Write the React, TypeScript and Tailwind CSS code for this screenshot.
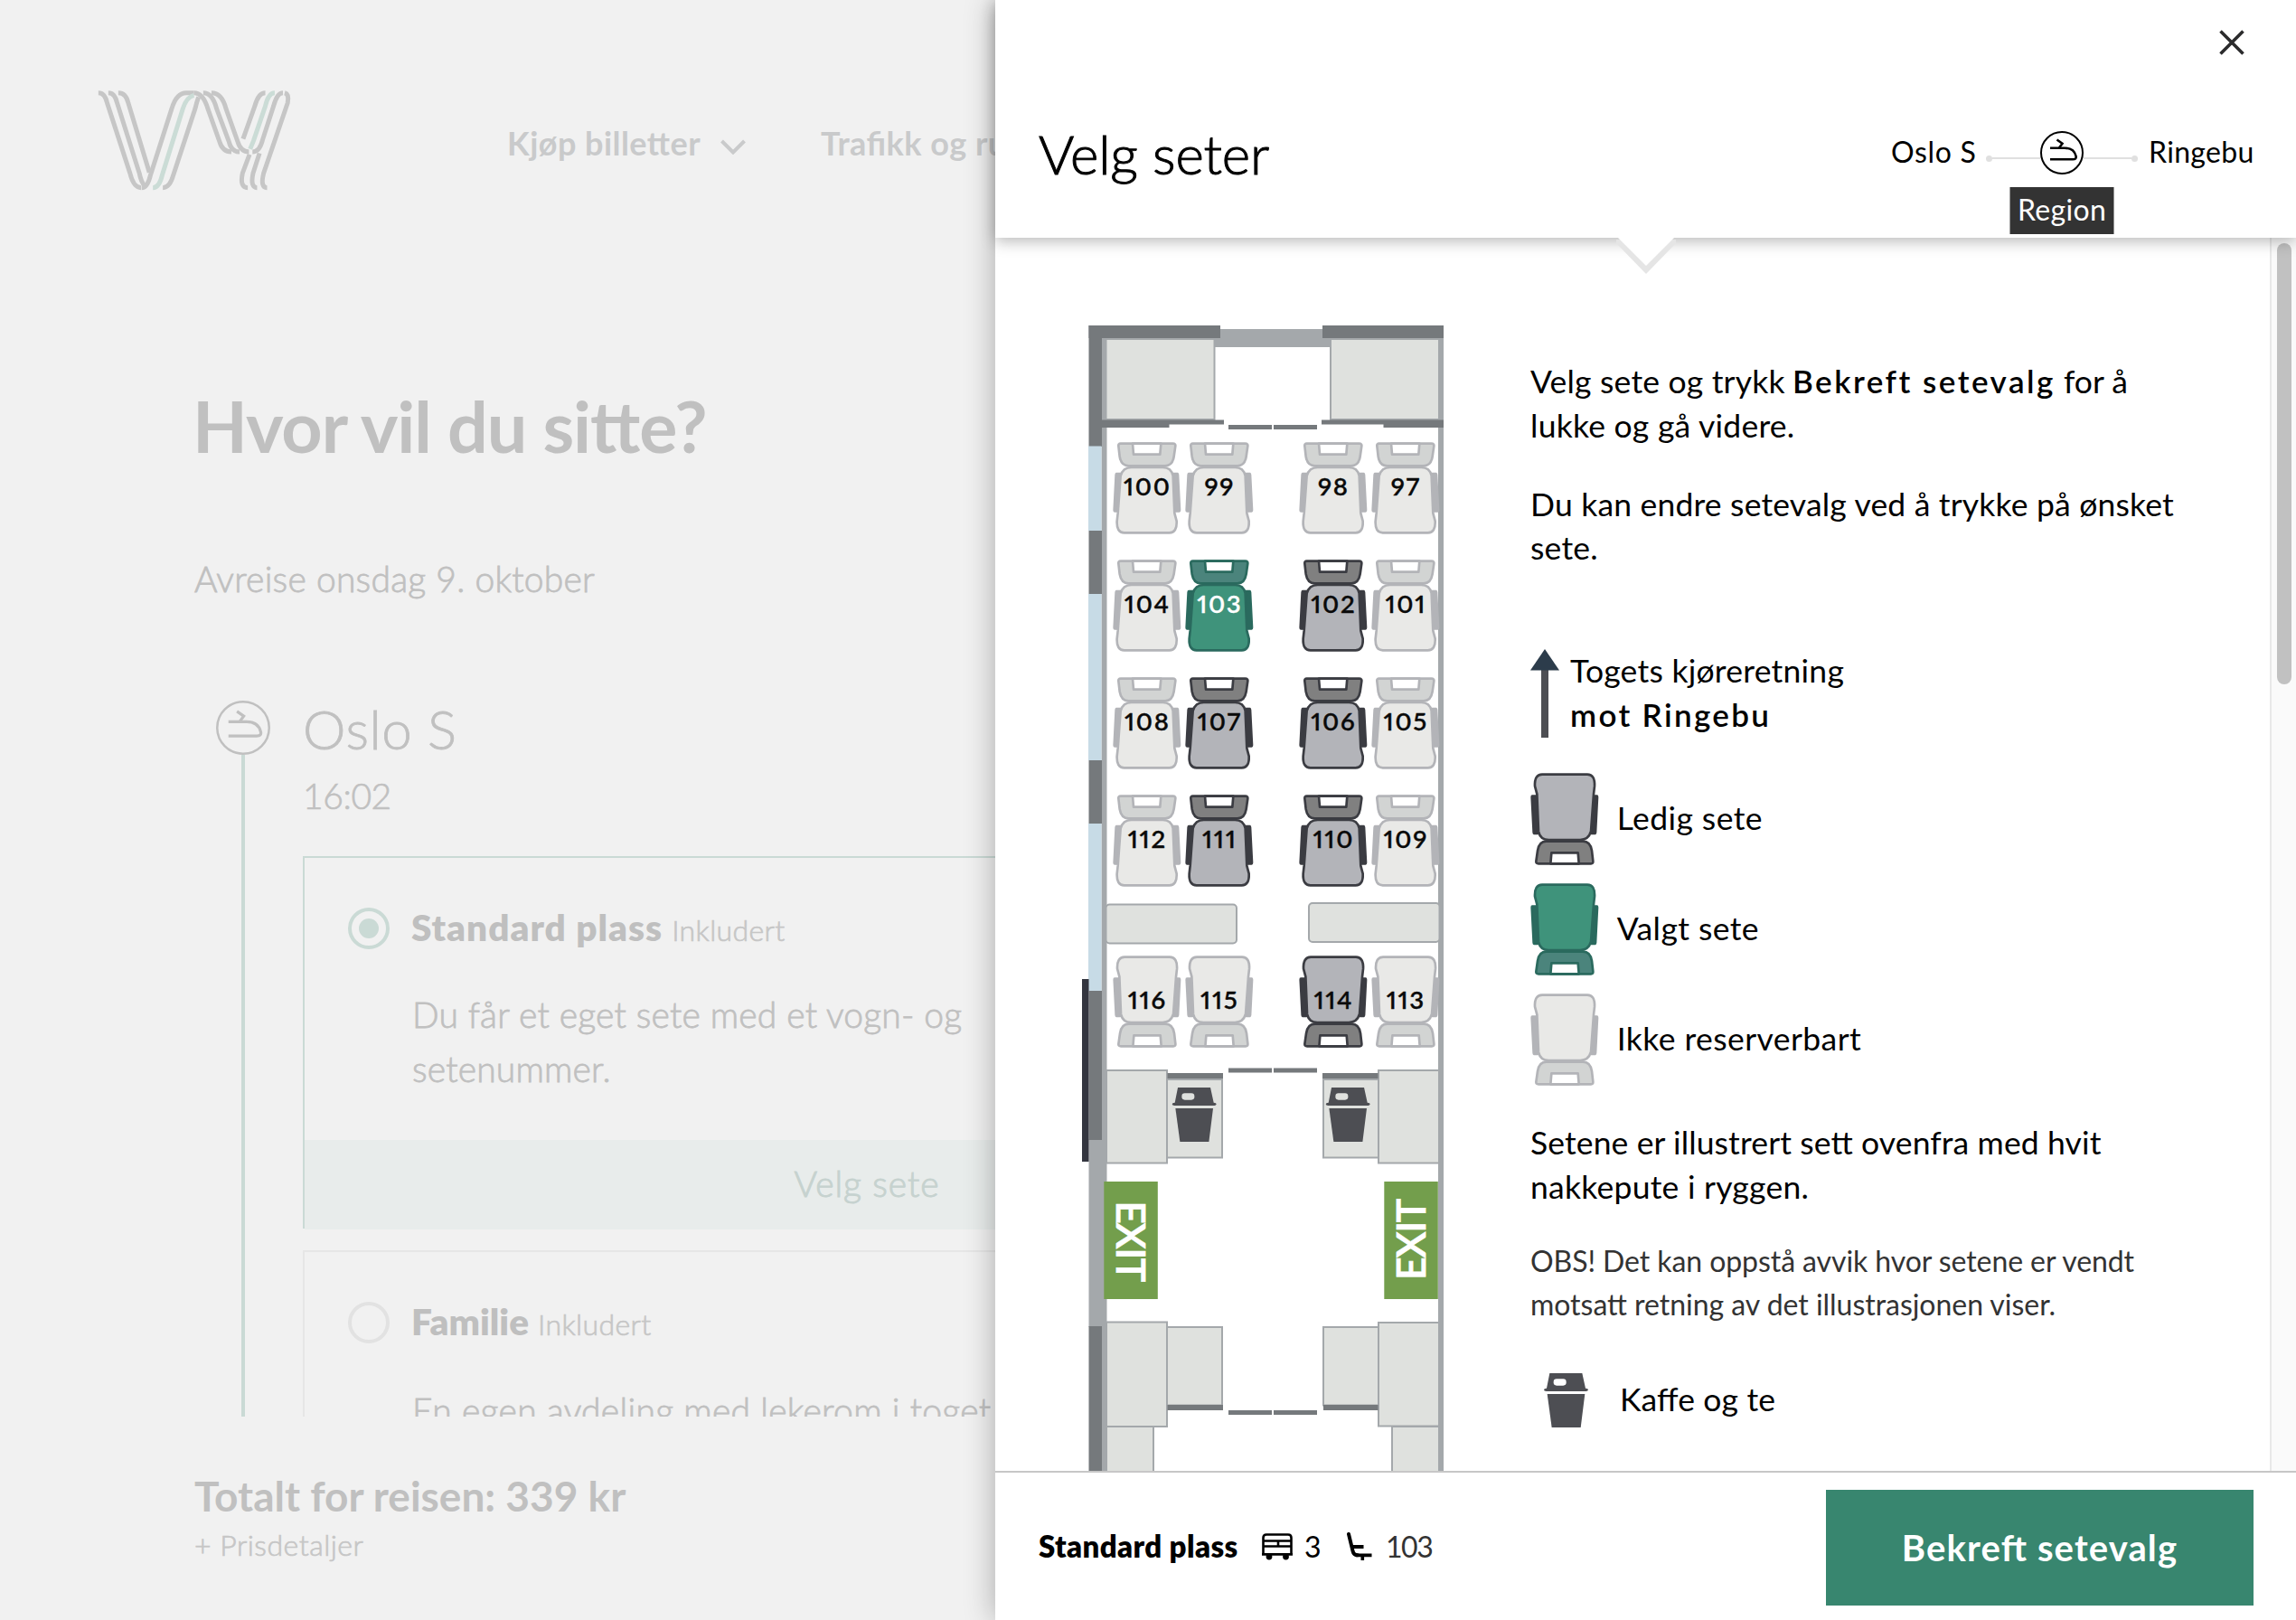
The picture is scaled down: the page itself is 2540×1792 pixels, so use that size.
import type { ReactNode } from "react";

type Kind = "taken" | "free" | "picked";

const SEAT_COLORS: Record<Kind, { line: string; head: string; body: string }> = {
  taken: { line: "#b3b4b8", head: "#d2d4d3", body: "#e9e9e7" },
  free: { line: "#3b3c42", head: "#808080", body: "#b3b4b9" },
  picked: { line: "#2a6a5e", head: "#4b847c", body: "#3f937b" },
};

function SeatShape({ kind }: { kind: Kind }) {
  const c = SEAT_COLORS[kind];
  return (
    <g stroke={c.line} strokeWidth={8} strokeLinejoin="round">
      <path d="M12 104H25V230H6Q4 230 4 226L10 108Q10 104 14 104Z" fill={c.line} strokeWidth={6} />
      <path d="M215 104H202V230H221Q223 230 223 226L217 108Q217 104 213 104Z" fill={c.line} strokeWidth={6} />
      <path d="M26 5H200Q209 5 208 13L203 48Q198 79 174 79H53Q28 79 23 48L19 13Q18 5 26 5Z" fill={c.head} />
      <path d="M66 5H160L157 41H69Z" fill="#fff" />
      <path d="M62 84H166Q194 84 200 112L205 236L212 262Q214 301 188 301H38Q12 301 14 262L17 236L26 112Q34 84 62 84Z" fill={c.body} />
    </g>
  );
}

type Seat = [label: string, col: number, row: number, kind: Kind, flipped?: boolean];

const COLS = [51, 131, 257, 337];
const ROWS = [149, 279, 409, 539, 717];

const SEATS: Seat[] = [
  ["100", 0, 0, "taken"], ["99", 1, 0, "taken"], ["98", 2, 0, "taken"], ["97", 3, 0, "taken"],
  ["104", 0, 1, "taken"], ["103", 1, 1, "picked"], ["102", 2, 1, "free"], ["101", 3, 1, "taken"],
  ["108", 0, 2, "taken"], ["107", 1, 2, "free"], ["106", 2, 2, "free"], ["105", 3, 2, "taken"],
  ["112", 0, 3, "taken"], ["111", 1, 3, "free"], ["110", 2, 3, "free"], ["109", 3, 3, "taken"],
  ["116", 0, 4, "taken", true], ["115", 1, 4, "taken", true], ["114", 2, 4, "free", true], ["113", 3, 4, "taken", true],
];

function CupShape({ hole }: { hole: string }) {
  return (
    <g fill="#4d4e53">
      <path d="M19 0H127L138 50Q147 51 147 55Q146 60 140 60H8Q0 60 0 55Q0 51 9 50Z" />
      <path d="M11 69H136L122 180H26Z" />
      <rect x="32" y="19" width="42" height="22" rx="10" fill={hole} />
    </g>
  );
}

function CarriageMap() {
  const wall = "#a4a8ab";
  const dark = "#75797c";
  const fill = "#dfe1de";
  const glass = "#c7dbe6";
  return (
    <svg className="mt-[77px] ml-[79px] h-[1287px] w-[440px] shrink-0" viewBox="0 0 440 1287">
      <g fill={wall}>
        <rect x="38.5" y="20" width="6" height="1268" />
        <rect x="411" y="20" width="6" height="1268" />
        <rect x="163" y="24" width="128" height="20" />
        <rect x="24.5" y="920" width="15" height="208" />
      </g>
      <g fill={fill} stroke={wall} strokeWidth="2">
        <rect x="43.5" y="35" width="120" height="89" />
        <rect x="292" y="35" width="120" height="89" />
        <rect x="43.5" y="660.5" width="144.5" height="43" rx="4" />
        <rect x="268" y="659" width="144.5" height="43" rx="4" />
        <rect x="111" y="854" width="61" height="86.5" />
        <rect x="284" y="854" width="61" height="86.5" />
        <rect x="44" y="844" width="67" height="102.5" />
        <rect x="345" y="844" width="67" height="102.5" />
        <rect x="111" y="1128" width="61" height="86.5" />
        <rect x="284" y="1128" width="61" height="86.5" />
        <rect x="44" y="1238" width="52" height="80" />
        <rect x="360" y="1238" width="52" height="80" />
        <rect x="44" y="1122.5" width="67" height="115.5" />
        <rect x="345" y="1123" width="67" height="114.5" />
      </g>
      <g fill={dark}>
        <rect x="24.5" y="20" width="14.5" height="134" />
        <rect x="24.5" y="20" width="145.5" height="14" />
        <rect x="283" y="20" width="134" height="14" />
        <path d="M39 124.5H174V129.5H113.5V133H39Z" />
        <path d="M417 124.5H282V129.5H350.5V133H417Z" />
        <rect x="24.5" y="247" width="14.5" height="70" />
        <rect x="24.5" y="501" width="14.5" height="70" />
        <rect x="24.5" y="756" width="14.5" height="165" />
        <rect x="24.5" y="1127" width="14.5" height="161" />
        <rect x="111.5" y="847" width="61.5" height="6" />
        <rect x="283" y="847" width="61.5" height="6" />
        <rect x="111.5" y="1214" width="61.5" height="6" />
        <rect x="284" y="1214" width="60.5" height="6" />
        {[130, 841.5, 1220].map((y) => (
          <g key={y}>
            <rect x="179" y={y} width="48" height="5" />
            <rect x="229" y={y} width="48" height="5" />
          </g>
        ))}
      </g>
      <g fill={glass}>
        <rect x="24" y="153.5" width="14.5" height="93.5" />
        <rect x="24" y="317" width="14.5" height="184" />
        <rect x="24" y="571" width="14.5" height="185" />
      </g>
      <rect x="17" y="743" width="7.5" height="202" fill="#33353f" />
      {SEATS.map(([label, col, row, kind, flipped]) => (
        <g key={label} transform={`translate(${COLS[col]} ${ROWS[row]})`}>
          <g transform={flipped ? "translate(75.7 102) scale(-0.3333)" : "scale(0.3333)"}>
            <SeatShape kind={kind} />
          </g>
          <text className="proportional-nums" x="38.3" y="59.3" textAnchor="middle" fontSize="27.5" fontWeight="600" letterSpacing="1.7" strokeWidth="0.3" stroke={kind === "picked" ? "#fff" : "#0a0a0a"} fill={kind === "picked" ? "#fff" : "#0a0a0a"}>
            {label}
          </text>
        </g>
      ))}
      <g transform="translate(116.7 863) scale(0.3333)"><CupShape hole={fill} /></g>
      <g transform="translate(286.7 863) scale(0.3333)"><CupShape hole={fill} /></g>
      <g fill="#739e4c">
        <rect x="41.3" y="967" width="59.5" height="130" />
        <rect x="351.3" y="967" width="59.5" height="130" />
      </g>
      <g fill="#fff" stroke="#fff" strokeWidth="0.7" fontWeight="600" fontSize="44.5" textAnchor="middle" letterSpacing="-1.4">
        <text transform="translate(55 1032.5) rotate(90)">EXIT</text>
        <text transform="translate(397 1031.5) rotate(-90)">EXIT</text>
      </g>
    </svg>
  );
}

function LegendSeat({ kind }: { kind: Kind }) {
  return (
    <svg className="h-[102px] w-[75.7px]" viewBox="0 0 227 306">
      <g transform="rotate(180 113.5 153)"><SeatShape kind={kind} /></g>
    </svg>
  );
}

function TrainBadge({ className }: { className: string }) {
  return (
    <svg className={className} viewBox="0 0 48 48" fill="none" stroke="currentColor" strokeWidth="2">
      <circle cx="24" cy="24" r="23" />
      <path strokeWidth="2.6" d="M11 31.3H36Q40.5 31.3 39.5 27.5C38 21.5 33 18.7 27 18.7H11" />
      <path strokeWidth="2.6" d="M18.5 9.5L24.5 13.7L21 18.5" />
    </svg>
  );
}

const LOGO_DARK = [
  "M43 126Q54 126 58 160L97 395Q103 443 116 443",
  "M60 126Q71 126 75 160L113 395Q116 425 122 436",
  "M77 126Q90 126 94 160L130 392",
  "M117 443Q127 443 132 400L168 180Q176 126 193 126H206",
  "M153 443Q165 443 171 400L208 180Q211 155 214 140",
  "M206 126Q222 126 230 180L250 290Q255 323 270 323",
  "M222 126Q238 126 245 180L266 290Q270 323 284 323",
  "M236 126Q254 126 261 180L281 290Q286 323 300 323",
  "M328 126Q316 126 310 170L290 280",
  "M358 126Q348 126 342 170L323 285Q318 323 306 323",
  "M361 126Q369 130 366 160L325 395Q319 443 331 443",
  "M301 332L289 395Q284 443 298 443",
  "M318 328L307 395Q302 443 314 443",
];

const LOGO_GREEN = [
  "M136 443Q147 443 152 400L187 180Q193 140 206 134",
  "M344 126Q333 126 328 170L308 285L302 314",
];

function Logo() {
  return (
    <svg className="mt-[61px] ml-[81px] h-[159px] w-[259px] shrink-0" viewBox="0 0 259 159" fill="none">
      <g transform="scale(0.6480 0.3310)" strokeWidth="5">
        {LOGO_DARK.map((d) => <path key={d} d={d} stroke="#c6c6c6" vectorEffect="non-scaling-stroke" />)}
        {LOGO_GREEN.map((d) => <path key={d} d={d} stroke="#cbdcd6" vectorEffect="non-scaling-stroke" />)}
      </g>
    </svg>
  );
}

function Option({ title, selected, children }: { title: string; selected?: boolean; children: ReactNode }) {
  return (
    <div className={selected ? "mt-[43px] h-[412px] w-[1248px] border-2 border-[#cadad5]" : "mt-6 h-[412px] w-[1248px] border-2 border-[#e6e6e6]"}>
      <div className="flex pt-[54px] pl-12">
        <div className={selected ? "mt-px flex size-[46px] items-center justify-center rounded-full border-4 border-[#cadad5]" : "mt-px size-[46px] rounded-full border-4 border-[#e2e2e2]"}>
          {selected && <div className="size-[22px] rounded-full bg-[#cadad5]" />}
        </div>
        <div className="ml-6 flex items-baseline leading-[46px]">
          <span className={selected ? "text-[40.5px] font-extrabold tracking-[0.025em] text-[#bfbfbf]" : "text-[40.5px] font-extrabold tracking-[0.001em] text-[#bfbfbf]"}>{title}</span>
          <span className="ml-[10px] text-[32px] font-light tracking-[0.0115em] text-[#c6c6c6] [-webkit-text-stroke:0.7px]">Inkludert</span>
        </div>
      </div>
      {children}
    </div>
  );
}

function BookingPage() {
  return (
    <div className="h-[1792px] w-[2540px] bg-[#f1f1f1] text-[#c0c0c0]">
      <header className="flex h-[220px]">
        <Logo />
        <nav className="mt-[138px] ml-[221px] flex h-10 text-[36px] leading-10 font-bold tracking-[0.013em] text-[#c9cacb]">
          <span className="w-[215px] whitespace-nowrap">Kjøp billetter</span>
          <svg className="mt-4 ml-[21px] h-[17px] w-[28px]" viewBox="0 0 28 17" fill="none" stroke="currentColor" strokeWidth="4">
            <path d="M1.5 2L14 14.5L26.5 2" />
          </svg>
          <span className="ml-[83px]">Trafikk og ruter</span>
        </nav>
      </header>
      <main className="pl-[215px]">
        <h1 className="mt-[203px] -ml-0.5 text-[79px] leading-[96px] font-bold tracking-[-0.0135em]">Hvor vil du sitte?</h1>
        <p className="mt-[97px] text-[39px] leading-[48px] font-light tracking-[0.0065em] [-webkit-text-stroke:0.8px]">Avreise onsdag 9. oktober</p>
        <section className="mt-[101px] ml-6 flex h-[802px] overflow-hidden">
          <div className="flex w-[60px] flex-col items-center pt-[10px]">
            <TrainBadge className="size-[60px] shrink-0" />
            <div className="w-1 flex-1 bg-[#cadad5]" />
          </div>
          <div className="ml-9 pt-[5px]">
            <div className="text-[60px] leading-[72px] font-light tracking-[0.0083em] [-webkit-text-stroke:0.8px]">Oslo S</div>
            <div className="mt-[14px] text-[39px] leading-[48px] font-light tracking-[-0.0103em] [-webkit-text-stroke:0.7px]">16:02</div>
            <Option title="Standard plass" selected>
              <p className="mt-[40px] ml-[119px] text-[39px] leading-[60px] font-light tracking-[0.0044em] [-webkit-text-stroke:0.8px]">
                Du får et eget sete med et vogn- og
                <br />
                setenummer.
              </p>
              <div className="mt-[49px] flex h-[99px] items-center justify-center bg-[#e8eceb] pb-[3px] text-[39px] font-light tracking-[0.0228em] text-[#c6d2cf] [-webkit-text-stroke:1px]">
                Velg sete
              </div>
            </Option>
            <Option title="Familie">
              <p className="mt-[42px] ml-[119px] text-[39px] leading-[60px] font-light tracking-[0.0078em] [-webkit-text-stroke:0.8px]">
                En egen avdeling med lekerom i toget
              </p>
            </Option>
          </div>
        </section>
        <div className="mt-[60px] text-[46px] leading-[56px] font-bold">Totalt for reisen: 339 kr</div>
        <div className="mt-[6px] text-[32px] leading-10 font-light tracking-[0.0156em] text-[#c6c6c6] [-webkit-text-stroke:0.7px]">+ Prisdetaljer</div>
      </main>
    </div>
  );
}

function Leg({ flip }: { flip?: boolean }) {
  return (
    <div className={flip ? "flex flex-row-reverse items-center pt-[12px]" : "flex items-center pt-[12px]"}>
      <div className="size-[7px] rounded-full bg-[#e0e0e0]" />
      <div className="h-0.5 w-[53px] bg-[#e0e0e0]" />
    </div>
  );
}

function DrawerHeader() {
  return (
    <header className="relative z-10 h-[263px] shrink-0 bg-white shadow-[0_4px_16px_rgba(0,0,0,0.28)]">
      <div className="flex justify-end pt-[33px] pr-[57px]">
        <svg className="size-7" viewBox="0 0 28 28" stroke="#2b2b2c" strokeWidth="3.6"><path d="M1.5 1.5L26.5 26.5M26.5 1.5L1.5 26.5" /></svg>
      </div>
      <div className="mt-[72px] flex h-[72px] items-center justify-between pr-[47px] pl-12">
        <h2 className="pt-0.5 text-[60px] leading-[72px] font-light tracking-[-0.002em] [-webkit-text-stroke:1px]">Velg seter</h2>
        <div className="flex items-center text-[32px] leading-10 whitespace-nowrap">
          <span className="-mt-0.5 w-[93px] tracking-[0.0208em]">Oslo S</span>
          <div className="ml-3"><Leg /></div>
          <div className="relative">
            <TrainBadge className="size-12" />
            <div className="absolute top-[62px] left-1/2 flex h-[52px] w-[115px] -translate-x-1/2 items-center justify-center bg-[#333] tracking-[0.0104em] text-white">
              <span className="-mt-0.5">Region</span>
            </div>
          </div>
          <Leg flip />
          <span className="-mt-0.5 ml-3 w-[116px] tracking-[0.01em]">Ringebu</span>
        </div>
      </div>
      <svg className="absolute top-[263px] left-[687px] h-[42px] w-[66px]" viewBox="0 0 66 42">
        <path d="M0 2V6L33 40L66 6V2Z" fill="#e5e5e5" />
        <path d="M2 0L33 31L64 0Z" fill="#fff" />
      </svg>
    </header>
  );
}

const LEGEND: [Kind, string][] = [
  ["free", "Ledig sete"],
  ["picked", "Valgt sete"],
  ["taken", "Ikke reserverbart"],
];

function Info() {
  return (
    <div className="ml-[73px] w-[760px] pt-[134px] text-[35.5px] leading-[48.5px] tracking-[0.007em] whitespace-nowrap">
      <p>
        <span className="inline-block w-[282px] tracking-[0.0055em]">Velg sete og trykk</span>
        <b className="ml-2 inline-block w-[291px] text-[35px] font-semibold tracking-[0.0714em] [font-feature-settings:'liga'_0]">Bekreft setevalg</b>
        <span className="ml-[9px] inline-block tracking-normal">for å</span>
        <br />
        lukke og gå videre.
      </p>
      <p className="mt-[38.5px]">
        <span className="tracking-[0.0053em]">Du kan endre setevalg ved å trykke på ønsket</span>
        <br />
        sete.
      </p>
      <div className="mt-[87px] flex h-[98px] leading-[48px]">
        <svg className="h-[98px] w-8" viewBox="0 0 32 98">
          <path d="M12 20H20V98H12Z" fill="#4d4e53" />
          <path d="M16 0L32 23.5H0Z" fill="#2c3c4b" />
        </svg>
        <div className="ml-3">
          Togets kjøreretning
          <br />
          <b className="text-[35px] font-semibold tracking-[0.067em]">mot Ringebu</b>
        </div>
      </div>
      <ul className="mt-[39.5px] flex flex-col gap-5 tracking-[0.012em]">
        {LEGEND.map(([kind, label]) => (
          <li key={kind} className="flex items-center">
            <LegendSeat kind={kind} />
            <span className="-mt-0.5 ml-5">{label}</span>
          </li>
        ))}
      </ul>
      <p className="mt-[39px]">
        <span className="tracking-[0.0035em]">Setene er illustrert sett ovenfra med hvit</span>
        <br />
        nakkepute i ryggen.
      </p>
      <p className="mt-[34px] text-[32px] leading-[47.5px] tracking-[-0.0025em] text-[#333]">
        OBS! Det kan oppstå avvik hvor setene er vendt
        <br />
        <span className="tracking-[-0.001em]">motsatt retning av det illustrasjonen viser.</span>
      </p>
      <div className="mt-[53px] flex items-center">
        <svg className="ml-[15px] h-[60px] w-[49px]" viewBox="0 0 147 180" preserveAspectRatio="none"><CupShape hole="#fff" /></svg>
        <span className="-mt-0.5 ml-[35px] tracking-[0.004em]">Kaffe og te</span>
      </div>
    </div>
  );
}

function DrawerFooter() {
  return (
    <footer className="flex h-[165px] shrink-0 items-start justify-between border-t-2 border-[#c7c7c7] pt-[19px] pr-[47px] pl-12">
      <div className="flex h-32 items-center pb-0.5 text-[32px]">
        <span className="w-[221px] text-[33px] font-extrabold tracking-[0.012em] whitespace-nowrap">Standard plass</span>
        <svg className="ml-[26px] h-[31px] w-[34px]" viewBox="0 0 34 31" fill="none" stroke="#000" strokeWidth="2.6">
          <path d="M1.5 23V5Q1.5 1.5 5 1.5H29Q32.5 1.5 32.5 5V23M1.5 8.5H32.5M1.5 14.5H32.5M18 8.5V14.5" />
          <path d="M0 23.3H34" strokeWidth="2.8" />
          <circle cx="8" cy="26" r="3.4" fill="#000" stroke="none" />
          <circle cx="26.5" cy="26" r="3.4" fill="#000" stroke="none" />
        </svg>
        <span className="ml-[13px] w-[18px]">3</span>
        <svg className="ml-[29px] h-[32px] w-7" viewBox="0 0 28 32" fill="none" stroke="#000">
          <path d="M2 2L6.5 20.5Q7.5 25.3 12 25.3" strokeWidth="4" strokeLinecap="round" />
          <path d="M10 25.3H27.5M6 16H18.5" strokeWidth="3.8" />
          <path d="M17.3 25V31" strokeWidth="3.6" />
        </svg>
        <span className="ml-[15px] w-[52px] tracking-[-0.045em] text-[#333]">103</span>
      </div>
      <button className="flex h-32 w-[473px] items-center justify-center bg-[#38866f] text-[40px] font-bold tracking-[0.028em] text-white">Bekreft setevalg</button>
    </footer>
  );
}

export default function App() {
  return (
    <div className="relative h-[1792px] w-[2540px] overflow-hidden font-['Lato',sans-serif] text-black [font-feature-settings:'liga'_1]">
      <BookingPage />
      <aside className="absolute top-0 right-0 flex h-[1792px] w-[1439px] flex-col bg-white shadow-[0_0_32px_rgba(0,0,0,0.3)]">
        <DrawerHeader />
        <div className="relative flex h-[1364px] overflow-hidden">
          <CarriageMap />
          <Info />
          <div className="absolute top-0 right-0 h-full w-[29px] border-l-2 border-[#e8e8e8] bg-[#fafafa] pt-[6px] pl-[6px]">
            <div className="h-[488px] w-4 rounded-full bg-[#c1c1c1]" />
          </div>
        </div>
        <DrawerFooter />
      </aside>
    </div>
  );
}
